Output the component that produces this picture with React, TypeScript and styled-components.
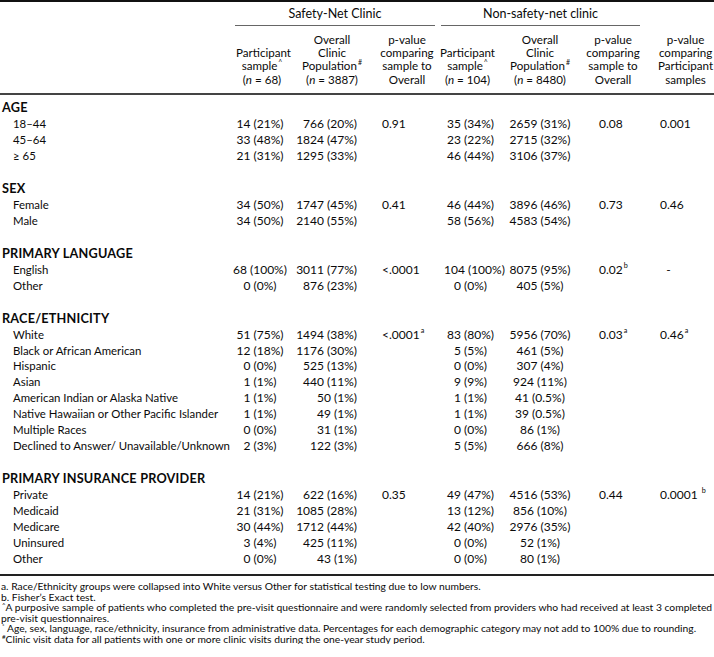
import React from 'react';
import styled, { createGlobalStyle } from 'styled-components';

const GlobalStyle = createGlobalStyle`
    html, body {
        margin: 0;
        padding: 0;
        background: #fff;
    }
    body {
        width: 714px;
        overflow: hidden;
        font-family: Lato, "Open Sans", sans-serif;
        color: #0a0a0a;
    }
`;

const Page = styled.div`
    width: 714px;
    display: flex;
    flex-direction: column;
`;

const Table = styled.table`
    width: 714px;
    border-collapse: collapse;
    table-layout: fixed;
    border-top: 2px solid #111;
    border-bottom: 2px solid #222;
    font-size: 12px;
`;

const SpanCell = styled.th`
    font-weight: normal;
    font-size: 12.5px;
    padding: 4.5px 0 0;
    line-height: 14px;
    text-align: center;
    vertical-align: bottom;
`;

const SpanLabel = styled.div`
    margin: 0 3px;
    padding-bottom: 4px;
    border-bottom: 1px solid #666;
`;

const ColHead = styled.th<{ $shift?: number }>`
    font-weight: normal;
    font-size: 11.6px;
    text-align: center;
    vertical-align: bottom;
    line-height: 13.4px;
    padding: 7px 0 6.5px ${p => p.$shift || 0}px;
    border-bottom: 2px solid #444;
`;

const SectionCell = styled.td<{ $first?: boolean }>`
    font-weight: bold;
    font-size: 12.7px;
    letter-spacing: 0.2px;
    line-height: 15.9px;
    padding: ${p => (p.$first ? 5.5 : 17.2)}px 0 0 2px;
    white-space: nowrap;
`;

const LabelCell = styled.td<{ $last?: boolean }>`
    font-size: 11.4px;
    line-height: 15.9px;
    padding: 0 0 ${p => (p.$last ? 7.5 : 0)}px 13px;
    white-space: nowrap;
`;

type Align = 'center' | 'right' | 'left';

const ValueCell = styled.td<{ $align: Align; $pad: number }>`
    line-height: 15.9px;
    padding: 0;
    text-align: ${p => p.$align};
    padding-left: ${p => (p.$align === 'right' ? 0 : p.$pad)}px;
    padding-right: ${p => (p.$align === 'right' ? p.$pad : 0)}px;
    white-space: nowrap;
    vertical-align: top;
`;

const Sup = styled.span`
    vertical-align: top;
    font-size: 0.6em;
    line-height: 1em;
    margin-left: 1px;
`;

const Notes = styled.div`
    padding: 5px 0 0 1px;
    font-size: 10.3px;
    line-height: 10.5px;
`;

const Note = styled.p`
    margin: 0;
    white-space: nowrap;
`;

// per-column alignment of the value cells
const cols: { align: Align; pad: number }[] = [
    { align: 'center', pad: 0 },
    { align: 'right', pad: 19 },
    { align: 'left', pad: 6 },
    { align: 'center', pad: 6 },
    { align: 'center', pad: 0 },
    { align: 'left', pad: 16 },
    { align: 'left', pad: 17 },
];

type Row = { label: React.ReactNode; v: React.ReactNode[] };
type Section = { title: string; rows: Row[] };

const sup = (s: string, val: string) => (
    <>
        {val}
        <Sup>{s}</Sup>
    </>
);

const sections: Section[] = [
    {
        title: 'AGE',
        rows: [
            { label: '18–44', v: ['14 (21%)', '766 (20%)', '0.91', '35 (34%)', '2659 (31%)', '0.08', '0.001'] },
            { label: '45–64', v: ['33 (48%)', '1824 (47%)', '', '23 (22%)', '2715 (32%)', '', ''] },
            { label: '≥ 65', v: ['21 (31%)', '1295 (33%)', '', '46 (44%)', '3106 (37%)', '', ''] },
        ],
    },
    {
        title: 'SEX',
        rows: [
            { label: 'Female', v: ['34 (50%)', '1747 (45%)', '0.41', '46 (44%)', '3896 (46%)', '0.73', '0.46'] },
            { label: 'Male', v: ['34 (50%)', '2140 (55%)', '', '58 (56%)', '4583 (54%)', '', ''] },
        ],
    },
    {
        title: 'PRIMARY LANGUAGE',
        rows: [
            { label: 'English', v: ['68 (100%)', '3011 (77%)', '<.0001', '104 (100%)', '8075 (95%)', sup('b', '0.02'), '\u00a0\u00a0-'] },
            { label: 'Other', v: ['0 (0%)', '876 (23%)', '', '0 (0%)', '405 (5%)', '', ''] },
        ],
    },
    {
        title: 'RACE/ETHNICITY',
        rows: [
            { label: 'White', v: ['51 (75%)', '1494 (38%)', sup('a', '<.0001'), '83 (80%)', '5956 (70%)', sup('a', '0.03'), sup('a', '0.46')] },
            { label: 'Black or African American', v: ['12 (18%)', '1176 (30%)', '', '5 (5%)', '461 (5%)', '', ''] },
            { label: 'Hispanic', v: ['0 (0%)', '525 (13%)', '', '0 (0%)', '307 (4%)', '', ''] },
            { label: 'Asian', v: ['1 (1%)', '440 (11%)', '', '9 (9%)', '924 (11%)', '', ''] },
            { label: 'American Indian or Alaska Native', v: ['1 (1%)', '50 (1%)', '', '1 (1%)', '41 (0.5%)', '', ''] },
            { label: 'Native Hawaiian or Other Pacific Islander', v: ['1 (1%)', '49 (1%)', '', '1 (1%)', '39 (0.5%)', '', ''] },
            { label: 'Multiple Races', v: ['0 (0%)', '31 (1%)', '', '0 (0%)', '86 (1%)', '', ''] },
            { label: 'Declined to Answer/ Unavailable/Unknown', v: ['2 (3%)', '122 (3%)', '', '5 (5%)', '666 (8%)', '', ''] },
        ],
    },
    {
        title: 'PRIMARY INSURANCE PROVIDER',
        rows: [
            { label: 'Private', v: ['14 (21%)', '622 (16%)', '0.35', '49 (47%)', '4516 (53%)', '0.44', sup('b', '0.0001 ')] },
            { label: 'Medicaid', v: ['21 (31%)', '1085 (28%)', '', '13 (12%)', '856 (10%)', '', ''] },
            { label: 'Medicare', v: ['30 (44%)', '1712 (44%)', '', '42 (40%)', '2976 (35%)', '', ''] },
            { label: 'Uninsured', v: ['3 (4%)', '425 (11%)', '', '0 (0%)', '52 (1%)', '', ''] },
            { label: 'Other', v: ['0 (0%)', '43 (1%)', '', '0 (0%)', '80 (1%)', '', ''] },
        ],
    },
];

const widths = [232, 56, 88, 62, 59, 86, 60, 71];

export default function App() {
    return (
        <Page>
            <GlobalStyle />
            <Table>
                <colgroup>
                    {widths.map((w, i) => (
                        <col key={i} style={{ width: w }} />
                    ))}
                </colgroup>
                <thead>
                    <tr>
                        <SpanCell />
                        <SpanCell colSpan={3}>
                            <SpanLabel>Safety-Net Clinic</SpanLabel>
                        </SpanCell>
                        <SpanCell colSpan={3}>
                            <SpanLabel>Non-safety-net clinic</SpanLabel>
                        </SpanCell>
                        <SpanCell />
                    </tr>
                    <tr>
                        <ColHead />
                        <ColHead $shift={4}>
                            Participant
                            <br />
                            sample<Sup>^</Sup>
                            <br />(<i>n</i> = 68)
                        </ColHead>
                        <ColHead>
                            Overall
                            <br />
                            Clinic
                            <br />
                            Population<Sup>#</Sup>
                            <br />(<i>n</i> = 3887)
                        </ColHead>
                        <ColHead>
                            p-value
                            <br />
                            comparing
                            <br />
                            sample to
                            <br />
                            Overall
                        </ColHead>
                        <ColHead>
                            Participant
                            <br />
                            sample<Sup>^</Sup>
                            <br />(<i>n</i> = 104)
                        </ColHead>
                        <ColHead>
                            Overall
                            <br />
                            Clinic
                            <br />
                            Population<Sup>#</Sup>
                            <br />(<i>n</i> = 8480)
                        </ColHead>
                        <ColHead>
                            p-value
                            <br />
                            comparing
                            <br />
                            sample to
                            <br />
                            Overall
                        </ColHead>
                        <ColHead $shift={14}>
                            p-value
                            <br />
                            comparing
                            <br />
                            Participant
                            <br />
                            samples
                        </ColHead>
                    </tr>
                </thead>
                <tbody>
                    {sections.map((s, si) => (
                        <React.Fragment key={s.title}>
                            <tr>
                                <SectionCell $first={si === 0} colSpan={8}>
                                    {s.title}
                                </SectionCell>
                            </tr>
                            {s.rows.map((r, ri) => {
                                const last = si === sections.length - 1 && ri === s.rows.length - 1;
                                return (
                                    <tr key={ri}>
                                        <LabelCell $last={last}>{r.label}</LabelCell>
                                        {r.v.map((v, ci) => (
                                            <ValueCell key={ci} $align={cols[ci].align} $pad={cols[ci].pad}>
                                                {v}
                                            </ValueCell>
                                        ))}
                                    </tr>
                                );
                            })}
                        </React.Fragment>
                    ))}
                </tbody>
            </Table>
            <Notes>
                <Note>a. Race/Ethnicity groups were collapsed into White versus Other for statistical testing due to low numbers.</Note>
                <Note>b. Fisher’s Exact test.</Note>
                <Note>
                    <Sup>^</Sup>A purposive sample of patients who completed the pre-visit questionnaire and were randomly selected from
                    providers who had received at least 3 completed
                </Note>
                <Note>pre-visit questionnaires.</Note>
                <Note>
                    <Sup>*</Sup> Age, sex, language, race/ethnicity, insurance from administrative data. Percentages for each demographic
                    category may not add to 100% due to rounding.
                </Note>
                <Note>
                    <Sup>#</Sup>Clinic visit data for all patients with one or more clinic visits during the one-year study period.
                </Note>
            </Notes>
        </Page>
    );
}
